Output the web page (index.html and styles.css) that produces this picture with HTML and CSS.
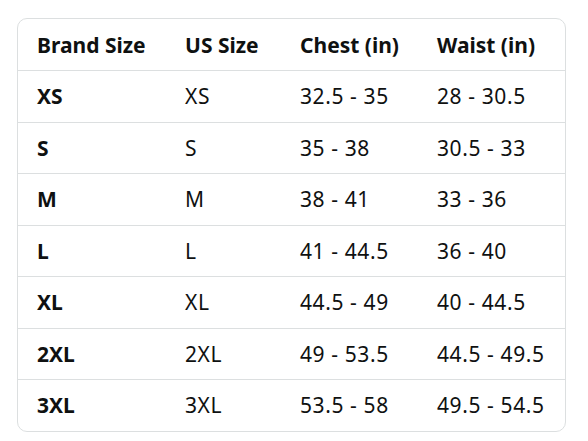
FILE: index.html
```html
<!DOCTYPE html>
<html>
<head>
<meta charset="utf-8">
<link rel="stylesheet" href="styles.css">
</head>
<body>
<div class="card">
<table class="size-table">
<thead>
<tr><th class="c1">Brand Size</th><th class="c2">US Size</th><th class="c3">Chest (in)</th><th class="c4">Waist (in)</th></tr>
</thead>
<tbody>
<tr><td class="brand">XS</td><td>XS</td><td>32.5 - 35</td><td>28 - 30.5</td></tr>
<tr><td class="brand">S</td><td>S</td><td>35 - 38</td><td>30.5 - 33</td></tr>
<tr><td class="brand">M</td><td>M</td><td>38 - 41</td><td>33 - 36</td></tr>
<tr><td class="brand">L</td><td>L</td><td>41 - 44.5</td><td>36 - 40</td></tr>
<tr><td class="brand">XL</td><td>XL</td><td>44.5 - 49</td><td>40 - 44.5</td></tr>
<tr><td class="brand">2XL</td><td>2XL</td><td>49 - 53.5</td><td>44.5 - 49.5</td></tr>
<tr><td class="brand">3XL</td><td>3XL</td><td>53.5 - 58</td><td>49.5 - 54.5</td></tr>
</tbody>
</table>
</div>
</body>
</html>
```
FILE: styles.css
```css
html, body {
  margin: 0;
  padding: 0;
  background: #ffffff;
}
body {
  padding: 18px 22px 0 17px;
  font-family: "Noto Sans", "Open Sans", sans-serif;
  color: #0f1111;
}
.card {
  width: 547px;
  border: 1px solid #dcdfe0;
  border-radius: 10px;
  overflow: hidden;
}
.size-table {
  width: 100%;
  border-collapse: collapse;
  table-layout: fixed;
}
.size-table th,
.size-table td {
  text-align: left;
  padding: 0;
  font-size: 21px;
  line-height: 24px;
  vertical-align: middle;
  white-space: nowrap;
}
.size-table th {
  font-weight: 700;
  height: 51px;
}
.size-table td {
  font-weight: 400;
  letter-spacing: 0.6px;
  height: 50.5px;
  border-top: 1px solid #dcdfe0;
}
.size-table td.brand {
  font-weight: 700;
  letter-spacing: 0;
}
.c1 { width: 148px; }
.c2 { width: 115px; }
.c3 { width: 137px; }
.size-table th:first-child,
.size-table td:first-child {
  padding-left: 19px;
}
```
